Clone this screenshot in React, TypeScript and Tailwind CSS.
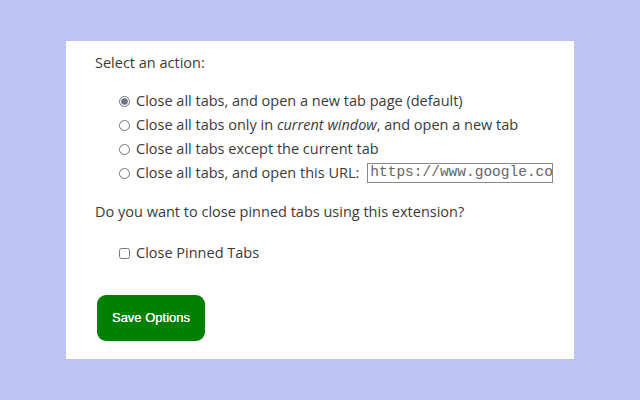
import { useState } from 'react';

const options = [
  { id: 'default', label: <>Close all tabs, and open a new tab page (default)</> },
  {
    id: 'window',
    label: (
      <>
        Close all tabs only in <i>current window</i>, and open a new tab
      </>
    ),
  },
  { id: 'except', label: <>Close all tabs except the current tab</> },
  { id: 'url', label: <>Close all tabs, and open this URL:</> },
];

export default function App() {
  const [action, setAction] = useState('default');
  const [pinned, setPinned] = useState(false);

  return (
    <div className="w-[640px] h-[400px] bg-[#bdc3f3] pt-[41px] pl-[66px] font-['Open_Sans',sans-serif] text-[#3a3a3a]">
      <div className="w-[508px] h-[318px] bg-white pl-[29px] pt-[12px]">
        <p className="text-[14.5px] leading-[20px]">Select an action:</p>

        <div className="mt-[16px] ml-[24px] flex flex-col">
          {options.map((o) => (
            <label key={o.id} className="flex items-center h-[24px] text-[14.5px]">
              <input
                type="radio"
                name="action"
                checked={action === o.id}
                onChange={() => setAction(o.id)}
                className="w-[11px] h-[11px] m-0 mr-[6px] accent-gray-500"
              />
              <span>{o.label}</span>
              {o.id === 'url' && (
                <input
                  type="text"
                  defaultValue="https://www.google.com"
                  className="ml-[8px] w-[186px] h-[20px] border border-[#8a8a8a] pl-[2px] text-[14.5px] font-['Liberation_Mono',monospace] text-[#666]"
                />
              )}
            </label>
          ))}
        </div>

        <p className="mt-[17px] text-[14.5px] leading-[20px]">Do you want to close pinned tabs using this extension?</p>

        <label className="mt-[21px] ml-[24px] flex items-center text-[14.5px] h-[20px]">
          <input
            type="checkbox"
            checked={pinned}
            onChange={() => setPinned(!pinned)}
            className="w-[11px] h-[11px] m-0 mr-[6px]"
          />
          Close Pinned Tabs
        </label>

        <button className="mt-[32px] ml-[2px] w-[108px] h-[46px] rounded-[9px] bg-[#008000] text-white text-[13px] font-['Liberation_Sans',sans-serif] [text-shadow:0_0_0.4px_white]">
          Save Options
        </button>
      </div>
    </div>
  );
}
